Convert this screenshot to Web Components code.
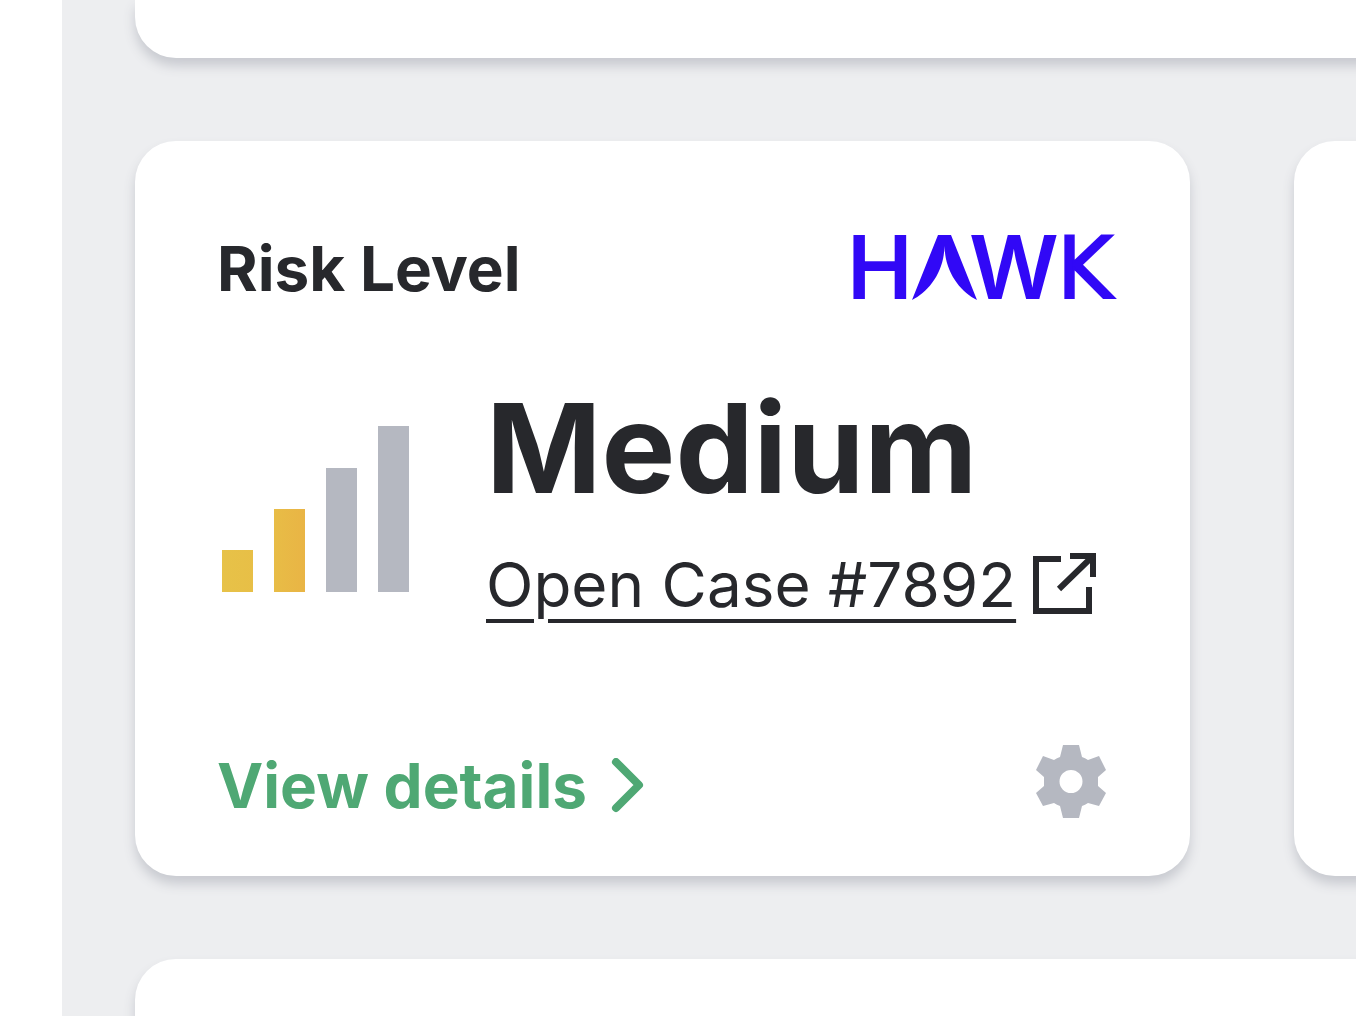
<!DOCTYPE html>
<html lang="en">
<head>
<meta charset="UTF-8">
<meta name="viewport" content="width=device-width, initial-scale=1">
<title>Risk Level</title>
<style>
    html, body { height: 100%; }
    body {
        margin: 0;
        overflow: hidden;
        font-family: Inter, "Liberation Sans", sans-serif;
        color: #27282c;
        --radius: 41px;
        --muted: #b5b8c1;
        --accent: #4fa874;
    }
</style>
</head>
<body>
<dashboard-shell>
    <dashboard-card slot="above" edge="top"></dashboard-card>
    <dashboard-card>
        <risk-level title-text="Risk Level" level="Medium" score="2" case-number="7892"></risk-level>
    </dashboard-card>
    <dashboard-card></dashboard-card>
    <dashboard-card slot="below" edge="bottom"></dashboard-card>
</dashboard-shell>

<script>
/**
 * <dashboard-shell>
 * Side strip plus a scrolled grid of cards
 */
class DashboardShell extends HTMLElement {
    constructor() {
        super();
        this.attachShadow({ mode: 'open' });
        this.shadowRoot.innerHTML = `
            <style>
                :host { display: flex; height: 100%; background: #fff; }
                aside { flex: 0 0 62px; }
                main {
                    --gap: 104px;
                    --peek: 62px;
                    flex: 1;
                    min-width: 0;
                    display: flex;
                    flex-direction: column;
                    gap: 83px;
                    padding-left: 73px;
                    overflow: hidden;
                    background: #edeef0;
                }
                .above, .below { display: grid; margin-right: -40px; }
                .above { flex: none; height: 58px; }
                .row {
                    display: grid;
                    grid-auto-flow: column;
                    grid-auto-columns: calc(100% - var(--gap) - var(--peek));
                    gap: var(--gap);
                }
                .below { flex: 1; }
            </style>
            <aside></aside>
            <main>
                <div class="above"><slot name="above"></slot></div>
                <div class="row"><slot></slot></div>
                <div class="below"><slot name="below"></slot></div>
            </main>
        `;
    }
}

/**
 * <dashboard-card>
 * White rounded panel. edge="top|bottom" is for cards that run off the view
 */
class DashboardCard extends HTMLElement {
    constructor() {
        super();
        this.attachShadow({ mode: 'open' });
        this.shadowRoot.innerHTML = `
            <style>
                :host {
                    display: block;
                    background: #fff;
                    border-radius: var(--radius);
                    box-shadow: 0 8px 12px #c8cad0;
                }
                :host([edge="top"]) { border-radius: 0 0 0 var(--radius); }
                :host([edge="bottom"]) { border-radius: var(--radius) 0 0 0; }
            </style>
            <slot></slot>
        `;
    }
}

class HawkLogo extends HTMLElement {
    constructor() {
        super();
        this.attachShadow({ mode: 'open' });
        this.shadowRoot.innerHTML = `
            <style>
                :host { display: block; }
                svg { display: block; width: 264px; height: 66px; fill: #3108f6; overflow: visible; }
                text { font-family: Inter, sans-serif; font-size: 88px; font-weight: 600; }
                .k { font-family: "DejaVu Sans", sans-serif; font-size: 85px; font-weight: 400; stroke: #3108f6; stroke-width: 2; }
            </style>
            <svg viewBox="0 0 264 66" role="img" aria-label="HAWK">
                <text x="-6" y="64">H</text>
                <path d="M85 0h13l26 65C108 57 92 38 91.500 11C91 38 75 57 59 65Z"/>
                <text x="116" y="64">W</text>
                <text class="k" x="204" y="63">K</text>
            </svg>
        `;
    }
}

/**
 * <signal-bars score="0..4">
 */
class SignalBars extends HTMLElement {
    constructor() {
        super();
        this.attachShadow({ mode: 'open' });
    }

    connectedCallback() {
        const score = Number(this.getAttribute('score'));
        let bars = '';
        for (let i = 0; i < 4; i++) {
            const h = [42, 83, 124, 166][i];
            const fill = i < score ? 'url(#warm)' : 'var(--muted)';
            bars += `<rect x="${5 + i * 52}" y="${185 - h}" width="31" height="${h}" fill="${fill}"/>`;
        }
        this.shadowRoot.innerHTML = `
            <style>
                :host { display: block; flex: none; }
                svg { display: block; width: 192px; height: 190px; }
            </style>
            <svg viewBox="0 0 192 190" aria-hidden="true">
                <defs>
                    <linearGradient id="warm" gradientUnits="userSpaceOnUse" x1="5" y1="0" x2="89" y2="0">
                        <stop offset="0" stop-color="#e7c248"/>
                        <stop offset="0.6" stop-color="#e8bd46"/>
                        <stop offset="1" stop-color="#e9b445"/>
                    </linearGradient>
                </defs>
                ${bars}
            </svg>
        `;
    }
}

class RiskLevel extends HTMLElement {
    constructor() {
        super();
        this.attachShadow({ mode: 'open' });
    }

    connectedCallback() {
        this.render();
    }

    render() {
        this.shadowRoot.innerHTML = `
            <style>
                :host { display: block; padding: 94px 73px 58px 82px; }
                header, footer { display: flex; align-items: flex-end; justify-content: space-between; }
                h2, p { margin: 0; font-weight: 700; }
                h2 { font-size: 62px; line-height: 64px; }
                .body { display: flex; align-items: center; gap: 77px; margin-top: 85px; }
                .level { font-size: 124px; line-height: 124px; }
                a { display: flex; align-items: center; font-size: 62px; line-height: 64px; text-decoration: none; }
                svg { display: block; flex: none; }
                .case { gap: 17px; margin-top: 43px; color: inherit; font-weight: 400; white-space: nowrap; }
                .case span {
                    text-decoration: underline;
                    text-decoration-thickness: 4px;
                    text-underline-offset: 12px;
                }
                .details { gap: 24px; color: var(--accent); font-weight: 700; }
                footer { margin-top: 128px; }
                button { padding: 0; border: 0; background: none; color: var(--muted); cursor: pointer; }
            </style>
            <header>
                <h2>${this.getAttribute('title-text')}</h2>
                <hawk-logo></hawk-logo>
            </header>
            <div class="body">
                <signal-bars score="${this.getAttribute('score')}"></signal-bars>
                <div>
                    <p class="level">${this.getAttribute('level')}</p>
                    <a class="case" href="#case">
                        <span>Open Case #${this.getAttribute('case-number')}</span>
                        <svg width="64" height="64" viewBox="0 0 64 64" fill="none" stroke="currentColor" stroke-width="6" aria-hidden="true">
                            <path d="M28 6H3V58H56V34M37 3H60V24M60 3L26 36"/>
                        </svg>
                    </a>
                </div>
            </div>
            <footer>
                <a class="details" href="#details">
                    <span>View details</span>
                    <svg width="34" height="56" viewBox="0 0 34 56" fill="none" stroke="currentColor" stroke-width="8" stroke-linecap="round" stroke-linejoin="round" aria-hidden="true">
                        <path d="M5 4L28 27L5 50"/>
                    </svg>
                </a>
                <button type="button" aria-label="Settings">
                    <svg width="92" height="73" viewBox="0 0 92 73" fill="currentColor" aria-hidden="true">
                        <path fill-rule="evenodd" d="M38 0H54L57 12Q60 13 63 15L74 11L81 25L73 32Q73 36 73 41L81 48L74 61L63 58Q60 60 57 61L54 73H38L35 61Q32 60 29 58L18 61L11 48L19 41Q19 36 19 32L11 25L18 11L29 15Q32 13 35 12ZM46 25A11.500 11.500 0 1 0 46 48A11.500 11.500 0 1 0 46 25Z"/>
                    </svg>
                </button>
            </footer>
        `;
    }
}

customElements.define('dashboard-shell', DashboardShell);
customElements.define('dashboard-card', DashboardCard);
customElements.define('hawk-logo', HawkLogo);
customElements.define('signal-bars', SignalBars);
customElements.define('risk-level', RiskLevel);
</script>
</body>
</html>
